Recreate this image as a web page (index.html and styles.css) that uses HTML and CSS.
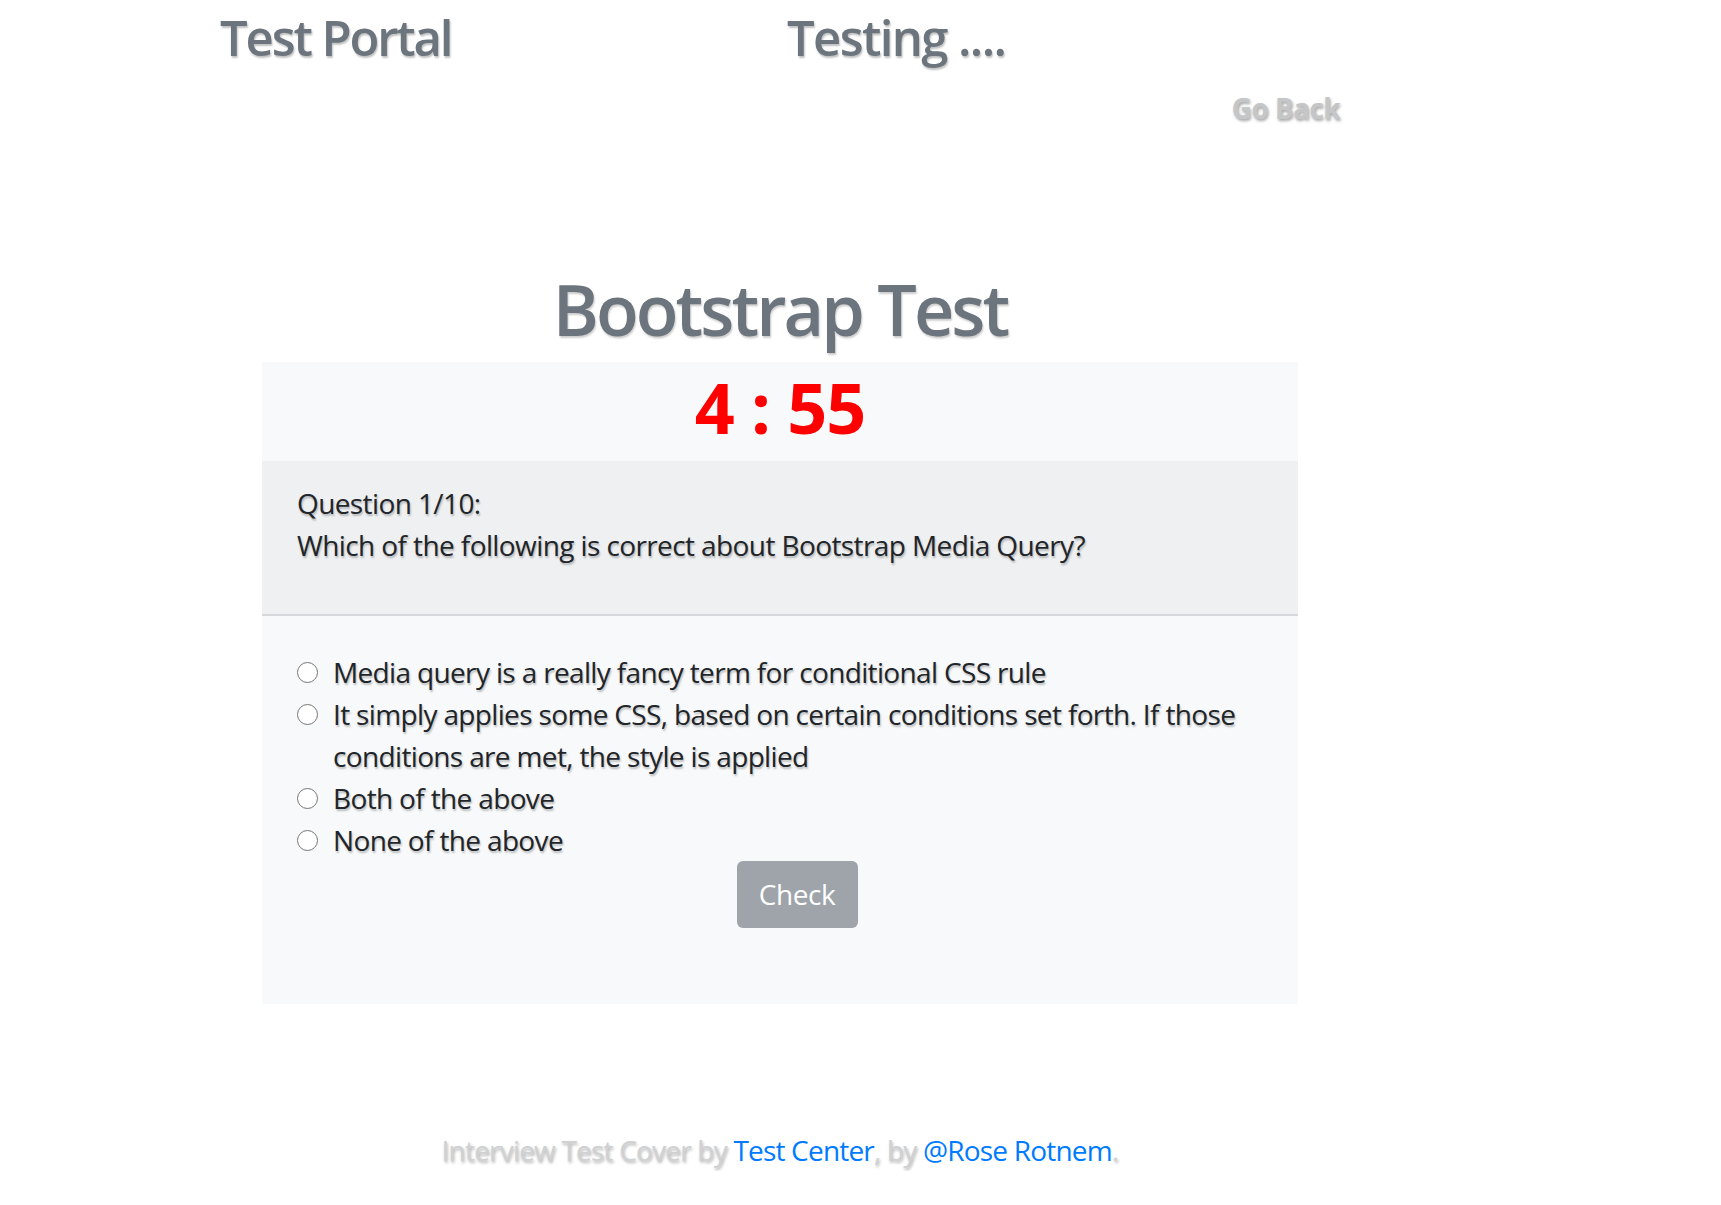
FILE: index.html
```html
<!DOCTYPE html>
<html lang="en">
<head>
<meta charset="utf-8">
<title>Test Portal</title>
<link rel="stylesheet" href="styles.css">
</head>
<body>
<header class="top">
  <div class="top-row">
    <h3 class="brand">Test Portal</h3>
    <h3 class="status">Testing ....</h3>
  </div>
  <div class="back-row">
    <a class="back" href="#">Go Back</a>
  </div>
</header>

<main class="quiz">
  <h1 class="title">Bootstrap Test</h1>
  <section class="card">
    <div class="timer">4 : 55</div>
    <div class="q-header">
      <div>Question 1/10:</div>
      <div>Which of the following is correct about Bootstrap Media Query?</div>
    </div>
    <div class="q-body">
      <label class="option"><input type="radio" name="answer"><span>Media query is a really fancy term for conditional CSS rule</span></label>
      <label class="option"><input type="radio" name="answer"><span>It simply applies some CSS, based on certain conditions set forth. If those conditions are met, the style is applied</span></label>
      <label class="option"><input type="radio" name="answer"><span>Both of the above</span></label>
      <label class="option"><input type="radio" name="answer"><span>None of the above</span></label>
      <div class="actions"><button class="check" disabled>Check</button></div>
    </div>
  </section>
</main>

<footer class="footer">
  <span class="muted">Interview Test Cover by </span><a href="#">Test Center</a><span class="muted">, by </span><a href="#">@Rose Rotnem</a><span class="muted">.</span>
</footer>
</body>
</html>
```

FILE: styles.css
```css
* { box-sizing: border-box; }

body {
  margin: 0;
  background: #fff;
  font-family: "Open Sans", "Noto Sans", sans-serif;
  font-size: 28px;
  line-height: 1.5;
  color: #212529;
}

.top-row {
  display: flex;
  padding-left: 220px;
  padding-top: 8px;
}

.brand, .status {
  margin: 0;
  font-size: 49px;
  line-height: 1.2;
  font-weight: 600;
  color: #6c757d;
  text-shadow: 1px 2px 2px rgba(0, 0, 0, 0.25);
}

.brand { width: 567px; letter-spacing: -2.1px; }
.status { letter-spacing: -1.6px; }

.back-row {
  display: flex;
  justify-content: flex-end;
  width: 1340px;
  padding-top: 20px;
}

.back {
  font-size: 28px;
  font-weight: 700;
  color: #c4c6c8;
  text-decoration: none;
  letter-spacing: -0.6px;
  text-shadow: 1px 2px 3px rgba(0, 0, 0, 0.35);
}

.quiz {
  width: 1036px;
  margin-left: 262px;
  margin-top: 138px;
}

.title {
  margin: 0 0 11px;
  text-align: center;
  font-size: 70px;
  line-height: 1.2;
  font-weight: 600;
  color: #6c757d;
  letter-spacing: -2.9px;
  text-shadow: 1px 2px 2px rgba(0, 0, 0, 0.2);
}

.card {
  background: #f8f9fa;
}

.timer {
  text-align: center;
  font-size: 70px;
  line-height: 1.2;
  font-weight: 700;
  color: #ff0000;
  padding: 3px 0 12px;
  letter-spacing: -1px;
}

.q-header {
  background: #eff0f2;
  border-bottom: 2px solid #d6d8db;
  padding: 21px 35px 48px;
  letter-spacing: -0.6px;
  text-shadow: 1px 2px 2px rgba(0, 0, 0, 0.25);
}

.q-body {
  padding: 35px 35px 76px;
}

.option {
  display: flex;
  align-items: flex-start;
  gap: 15px;
  letter-spacing: -0.65px;
  text-shadow: 1px 2px 2px rgba(0, 0, 0, 0.25);
}

.option input {
  appearance: none;
  -webkit-appearance: none;
  flex: none;
  width: 21px;
  height: 21px;
  margin: 11px 0 0;
  border: 1px solid #767676;
  border-radius: 50%;
  background: #fff;
}

.actions {
  display: flex;
  justify-content: center;
  padding-left: 34px;
}

.check {
  width: 121px;
  height: 67px;
  padding: 0;
  border: none;
  border-radius: 6px;
  background: #9ea4aa;
  color: #fff;
  font-family: inherit;
  font-size: 28px;
  letter-spacing: -0.4px;
}

.footer {
  margin-top: 125px;
  text-align: center;
  width: 1560px;
  letter-spacing: -0.8px;
}

.footer .muted {
  color: #cfd1d3;
  text-shadow: 1px 2px 3px rgba(0, 0, 0, 0.3);
}

.footer a {
  color: #007bff;
  text-decoration: none;
}
```
